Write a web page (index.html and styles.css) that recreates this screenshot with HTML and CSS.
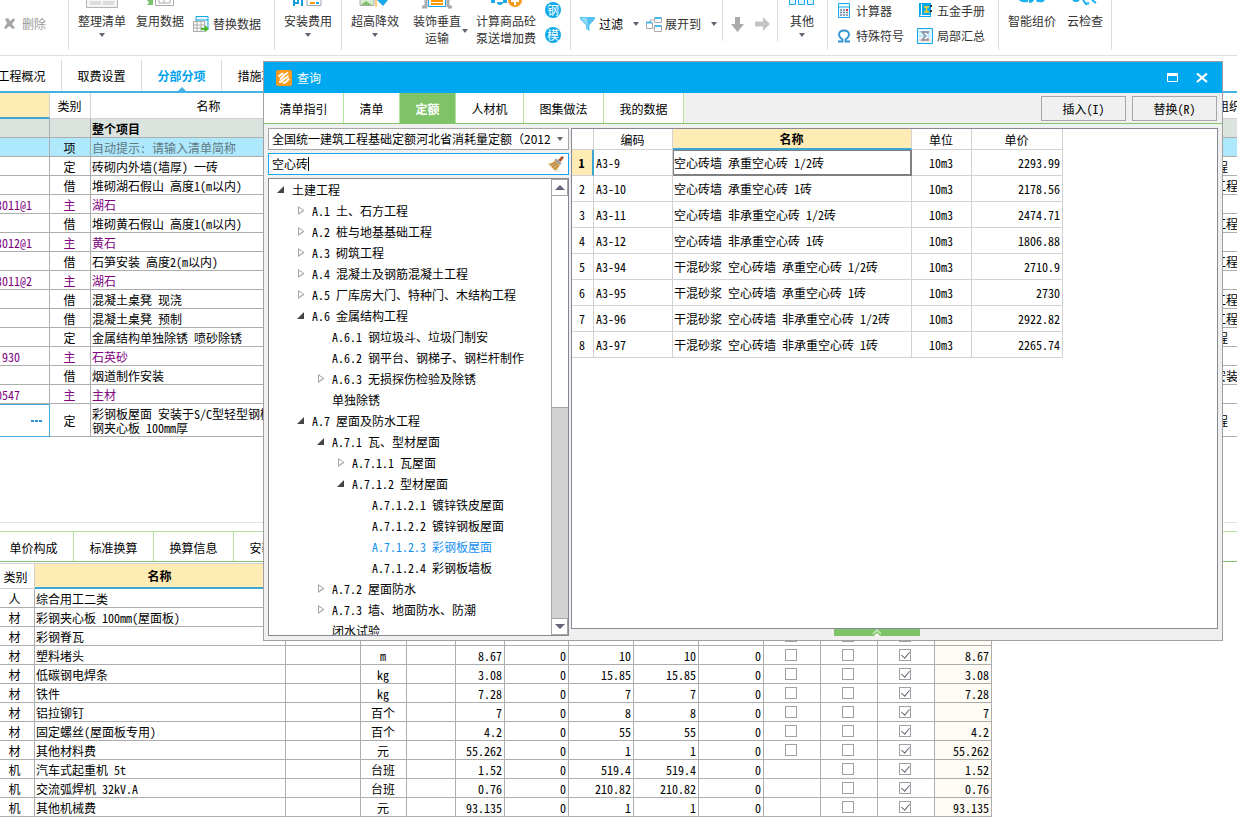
FILE: index.html
```html
<!DOCTYPE html>
<html lang="zh-CN">
<head>
<meta charset="utf-8">
<title>查询</title>
<link rel="stylesheet" href="styles.css">
</head>
<body>
<header class="toolbar">
  <div class="group g-delete">
    <button class="tool muted"><svg width="12" height="12" viewBox="0 0 12 12"><path d="M1 1l3-1 2 3 4-3 1 2-3 4 3 4-2 1-4-3-3 3-2-1 3-5z" fill="#a6a6a6"/></svg>删除</button>
  </div>
  <div class="group g-edit">
    <button class="big"><svg width="32" height="12" viewBox="0 0 32 12"><path d="M.5 0v7.500h31V0" fill="#f4f4f4" stroke="#b5b5b5"/><path d="M4 1h11v4H4zM17 1h11v4H17z" fill="#dcdcdc"/></svg><span>整理清单</span><i class="caret"></i></button>
    <button class="big"><svg width="32" height="12" viewBox="0 0 32 12"><path d="M3 5l2-2-2-3h6v5z" fill="#7dc36b"/><path d="M11.500 0v5.500h18V0M15 0v3h11V0M20 0v3" fill="none" stroke="#aaa"/></svg><span>复用数据</span></button>
    <button class="tool"><svg width="16" height="16" viewBox="0 0 16 16"><path d="M3 .5h12v13H3zM3 4h12" fill="#e9f8fe" stroke="#16a7e0"/><path d="M.5 5.500h11v10H.5zM.5 9h11M.5 12h11M4 5v10M8 5v10" fill="#fff" stroke="#aaa"/><path d="M8 12h4V9l4 4-4 3v-2H8z" fill="#45b82e"/></svg>替换数据</button>
  </div>
  <div class="group g-fee">
    <button class="big"><svg width="32" height="12" viewBox="0 0 32 12"><path d="M2 0v6M6 0v4M10 0v6M1 3h5" fill="none" stroke="#129ee0" stroke-width="2"/><path d="M15 0v5.500h14V0" fill="none" stroke="#9aa5b5"/><path d="M18 3h5" stroke="#f90" stroke-width="2"/><path d="M24 3h3" stroke="#18a9ea" stroke-width="2"/></svg><span>安装费用</span><i class="caret"></i></button>
  </div>
  <div class="group g-high">
    <button class="big"><svg width="32" height="12" viewBox="0 0 32 12"><path d="M1 0v5.500h14V0" fill="#d8eed0" stroke="#aaa"/><path d="M2 5l5-4 6 4z" fill="#7dc36b"/><path d="M17 0v7" stroke="#f90"/><path d="M18 0h11l-5 6z" fill="#18a9ea"/></svg><span>超高降效</span><i class="caret"></i></button>
    <div class="split">
      <button class="big"><svg width="32" height="12" viewBox="0 0 32 12"><path d="M1 7h5M5 7V0M27 7h4M27 7V0" fill="none" stroke="#aaa" stroke-width="3"/><path d="M7.500 0v6.500h17V0" fill="#fff" stroke="#18a9ea"/><path d="M10 1h12M10 4h12" stroke="#f90" stroke-width="2"/></svg><span>装饰垂直<br>运输</span></button>
      <button class="drop" aria-label="更多"><i class="caret"></i></button>
    </div>
    <button class="big"><svg width="32" height="12" viewBox="0 0 32 12"><path d="M1 0h4v3H1zM7 2a3 3 0 1 0 6 0zM13 0h4v3h-4z" fill="#18a9ea"/><circle cx="25" cy="0" r="7" fill="#f79a1c"/><path d="M25 0v5M21 1h8" stroke="#fff" stroke-width="2"/></svg><span>计算商品砼<br>泵送增加费</span></button>
    <div class="stack rounds"><button class="round">钢</button><button class="round">模</button></div>
  </div>
  <div class="group g-filter">
    <button class="tool strong"><svg width="16" height="14" viewBox="0 0 16 14"><path d="M0 0h15v2L9.500 8v6L6 12V8L0 2z" fill="#55c3f1"/><path d="M1 1h6l1 12-1-1V8z" fill="#92dcf8"/></svg>过滤<i class="caret"></i></button>
    <button class="tool"><svg width="16" height="15" viewBox="0 0 16 15"><path d="M.5 5.500h6v6h-6zM8.500.5h7v5h-7zM8.500 8.500h7v6h-7zM4 5V3h4M7 11h2" fill="#fff" stroke="#aaa"/><path d="M0 5.500h6M9 1h6M9 9h6" stroke="#47b9e8" stroke-width="2"/></svg>展开到<i class="caret"></i></button>
  </div>
  <div class="group g-move">
    <button class="tool" aria-label="下移"><svg width="14" height="15" viewBox="0 0 14 15"><path d="M4 0h5v7h4l-6.500 8L0 7h4z" fill="#ababab"/></svg></button>
    <button class="tool" aria-label="右移"><svg width="15" height="14" viewBox="0 0 15 14"><path d="M0 4.500h8V0l7 7-7 7V9.500H0z" fill="#c4c4c4"/></svg></button>
  </div>
  <div class="group g-other">
    <button class="big"><svg width="26" height="12" viewBox="0 0 26 12"><path d="M.5 0v4.500h6V0M9.500 0v4.500h6V0M18.500 0v4.500h6V0" fill="#dff4fd" stroke="#18a9ea"/></svg><span>其他</span><i class="caret"></i></button>
  </div>
  <div class="group g-utils">
    <div class="stack">
      <button class="tool"><svg width="16" height="16" viewBox="0 0 16 16"><path d="M2.500 .5h11v14h-11zM2 4h12" fill="#eefaff" stroke="#18a9ea"/><path d="M4 7h2M7 7h2M4 9.500h2M7 9.500h2M10 9.500h2M4 12h2M7 12h2M10 12h2" stroke="#789" stroke-width="1.500"/><path d="M10 7h2" stroke="#e33" stroke-width="2"/></svg>计算器</button>
      <button class="tool"><svg width="16" height="16" viewBox="0 0 16 16"><path d="M2 13.500h4.500v-2C1 8 2.500 2.500 8 2.500S15 8 9.500 11.500v2H14" fill="none" stroke="#2f94d0" stroke-width="1.800"/></svg>特殊符号</button>
    </div>
    <div class="stack">
      <button class="tool"><svg width="16" height="16" viewBox="0 0 16 16"><path d="M2 0h12v14H2z" fill="#08a8ea"/><path d="M4.500 1v11M3 12.500h10" stroke="#fff"/><path d="M7 4h5M9.500 4v5M7 9h5" stroke="#ffd21f" stroke-width="1.500"/><path d="M14 2v2M14 7v2" stroke="#333" stroke-width="2"/></svg>五金手册</button>
      <button class="tool"><svg width="16" height="16" viewBox="0 0 16 16"><path d="M.5.5h15v15H.5z" fill="#e4f6fd" stroke="#11a7e7"/><path d="M2 4h12M2 8h12" stroke="#7ad0f0" stroke-dasharray="2 1"/><path d="M2 12h12" stroke="#fdc" stroke-width="3"/><path d="M11 6V4H5l3.500 4L5 12h6v-2" fill="none" stroke="#889" stroke-width="1.300"/></svg>局部汇总</button>
    </div>
  </div>
  <div class="group g-smart">
    <button class="big"><svg width="32" height="12" viewBox="0 0 32 12"><path d="M3 0q2 3 9 2V0zM13 0v3q4 0 5-3zM20 0q0 3 7 2l2-2z" fill="#18b1ed"/></svg><span>智能组价</span></button>
    <button class="big"><svg width="32" height="12" viewBox="0 0 32 12"><path d="M4 0q3 2 6 0M14 0l3 4 3-1M23 0l4 3" fill="none" stroke="#18b1ed" stroke-width="2"/></svg><span>云检查</span></button>
  </div>
</header>

<nav class="page-tabs">
  <button>工程概况</button><button>取费设置</button><button class="active">分部分项</button><button>措施项目</button><button>其他项目</button>
</nav>

<main class="upper">
  <table class="grid items">
    <colgroup><col class="c-code"><col class="c-kind"><col class="c-name"><col><col class="c-org"></colgroup>
    <thead><tr><th class="current"></th><th>类别</th><th>名称</th><th></th><th class="org">组织</th></tr></thead>
    <tbody>
      <tr class="total"><td></td><td></td><td>整个项目</td><td></td><td></td></tr>
      <tr class="hint"><td></td><td>项</td><td>自动提示: 请输入清单简称</td><td></td><td></td></tr>
      <tr><td></td><td>定</td><td>砖砌内外墙(墙厚) 一砖</td><td></td><td class="tail">程</td></tr>
      <tr><td></td><td>借</td><td>堆砌湖石假山 高度1(m以内)</td><td></td><td>工程</td></tr>
      <tr class="main"><td>3011@1</td><td>主</td><td>湖石</td><td></td><td></td></tr>
      <tr><td></td><td>借</td><td>堆砌黄石假山 高度1(m以内)</td><td></td><td>工程</td></tr>
      <tr class="main"><td>3012@1</td><td>主</td><td>黄石</td><td></td><td></td></tr>
      <tr><td></td><td>借</td><td>石笋安装 高度2(m以内)</td><td></td><td>工程</td></tr>
      <tr class="main"><td>3011@2</td><td>主</td><td>湖石</td><td></td><td></td></tr>
      <tr><td></td><td>借</td><td>混凝土桌凳 现浇</td><td></td><td>工程</td></tr>
      <tr><td></td><td>借</td><td>混凝土桌凳 预制</td><td></td><td>工程</td></tr>
      <tr><td></td><td>定</td><td>金属结构单独除锈 喷砂除锈</td><td></td><td class="tail">程</td></tr>
      <tr class="main"><td>.930</td><td>主</td><td>石英砂</td><td></td><td></td></tr>
      <tr><td></td><td>借</td><td>烟道制作安装</td><td></td><td>安装</td></tr>
      <tr class="main"><td>0547</td><td>主</td><td>主材</td><td></td><td></td></tr>
      <tr class="tall"><td class="editing"><button class="more" aria-label="选择"><i></i><i></i><i></i></button></td><td>定</td><td>彩钢板屋面 安装于S/C型轻型钢檩条<br>钢夹心板 100mm厚</td><td></td><td class="tail">程</td></tr>
    </tbody>
  </table>
</main>

<section class="lower">
  <nav class="detail-tabs"><button>单价构成</button><button>标准换算</button><button>换算信息</button><button>安装费用</button></nav>
  <table class="grid parts">
    <colgroup><col class="p1"><col class="p2"><col class="p3"><col class="p4"><col class="p5"><col class="p5"><col class="p7"><col class="p8"><col class="p8"><col class="p8"><col class="p11"><col class="p11"><col class="p11"><col class="p11"></colgroup>
    <thead><tr><th>类别</th><th class="current">名称</th><th></th><th></th><th></th><th></th><th></th><th></th><th></th><th></th><th></th><th></th><th></th><th></th></tr></thead>
    <tbody>
      <tr><td>人</td><td>综合用工二类</td><td></td><td></td><td></td><td></td><td></td><td></td><td></td><td></td><td></td><td></td><td></td><td></td></tr>
      <tr><td>材</td><td>彩钢夹心板 100mm(屋面板)</td><td></td><td></td><td></td><td></td><td></td><td></td><td></td><td></td><td></td><td></td><td></td><td></td></tr>
      <tr><td>材</td><td>彩钢脊瓦</td><td></td><td></td><td></td><td></td><td></td><td></td><td></td><td></td><td><input type="checkbox" aria-label="选项一"></td><td><input type="checkbox" aria-label="选项二"></td><td><input type="checkbox" aria-label="选项三" checked></td><td></td></tr>
      <tr><td>材</td><td>塑料堵头</td><td></td><td>m</td><td></td><td>8.67</td><td>0</td><td>10</td><td>10</td><td>0</td><td><input type="checkbox" aria-label="选项一"></td><td><input type="checkbox" aria-label="选项二"></td><td><input type="checkbox" aria-label="选项三" checked></td><td>8.67</td></tr>
      <tr><td>材</td><td>低碳钢电焊条</td><td></td><td>kg</td><td></td><td>3.08</td><td>0</td><td>15.85</td><td>15.85</td><td>0</td><td><input type="checkbox" aria-label="选项一"></td><td><input type="checkbox" aria-label="选项二"></td><td><input type="checkbox" aria-label="选项三" checked></td><td>3.08</td></tr>
      <tr><td>材</td><td>铁件</td><td></td><td>kg</td><td></td><td>7.28</td><td>0</td><td>7</td><td>7</td><td>0</td><td><input type="checkbox" aria-label="选项一"></td><td><input type="checkbox" aria-label="选项二"></td><td><input type="checkbox" aria-label="选项三" checked></td><td>7.28</td></tr>
      <tr><td>材</td><td>铝拉铆钉</td><td></td><td>百个</td><td></td><td>7</td><td>0</td><td>8</td><td>8</td><td>0</td><td><input type="checkbox" aria-label="选项一"></td><td><input type="checkbox" aria-label="选项二"></td><td><input type="checkbox" aria-label="选项三" checked></td><td>7</td></tr>
      <tr><td>材</td><td>固定螺丝(屋面板专用)</td><td></td><td>百个</td><td></td><td>4.2</td><td>0</td><td>55</td><td>55</td><td>0</td><td><input type="checkbox" aria-label="选项一"></td><td><input type="checkbox" aria-label="选项二"></td><td><input type="checkbox" aria-label="选项三" checked></td><td>4.2</td></tr>
      <tr><td>材</td><td>其他材料费</td><td></td><td>元</td><td></td><td>55.262</td><td>0</td><td>1</td><td>1</td><td>0</td><td><input type="checkbox" aria-label="选项一"></td><td><input type="checkbox" aria-label="选项二"></td><td><input type="checkbox" aria-label="选项三" checked></td><td>55.262</td></tr>
      <tr><td>机</td><td>汽车式起重机 5t</td><td></td><td>台班</td><td></td><td>1.52</td><td>0</td><td>519.4</td><td>519.4</td><td>0</td><td></td><td><input type="checkbox" aria-label="选项二"></td><td><input type="checkbox" aria-label="选项三" checked></td><td>1.52</td></tr>
      <tr><td>机</td><td>交流弧焊机 32kV.A</td><td></td><td>台班</td><td></td><td>0.76</td><td>0</td><td>210.82</td><td>210.82</td><td>0</td><td></td><td><input type="checkbox" aria-label="选项二"></td><td><input type="checkbox" aria-label="选项三" checked></td><td>0.76</td></tr>
      <tr><td>机</td><td>其他机械费</td><td></td><td>元</td><td></td><td>93.135</td><td>0</td><td>1</td><td>1</td><td>0</td><td></td><td><input type="checkbox" aria-label="选项二"></td><td><input type="checkbox" aria-label="选项三" checked></td><td>93.135</td></tr>
    </tbody>
  </table>
</section>

<section class="dialog" role="dialog" aria-labelledby="dialog-title">
  <header class="titlebar">
    <svg width="16" height="16" viewBox="0 0 16 16"><rect width="16" height="16" rx="2" fill="#f79a1c"/><path d="M2.500 6.500L7 3M4 9.500L9 4.500M8 5L12 2.500M3 12Q6 12 7 10L12.500 6M7 13Q10 13 13 8.500" fill="none" stroke="#fff" stroke-width="2"/></svg>
    <h1 id="dialog-title">查询</h1>
    <button aria-label="最大化"><svg width="12" height="9" viewBox="0 0 12 9"><path d="M.5 1h10v7.500H.5z" fill="none" stroke="#fff"/><path d="M0 0h11v3H0z" fill="#fff"/></svg></button>
    <button aria-label="关闭"><svg width="12" height="10" viewBox="0 0 12 10"><path d="M1 .5l10 8.500M11 .5L1 9" stroke="#fff" stroke-width="2.200"/></svg></button>
  </header>
  <div class="dialog-bar">
    <nav class="dialog-tabs"><button>清单指引</button><button class="narrow">清单</button><button class="narrow active">定额</button><button class="medium">人材机</button><button>图集做法</button><button>我的数据</button></nav>
    <div class="actions"><button>插入(I)</button><button>替换(R)</button></div>
  </div>
  <div class="dialog-body">
    <aside class="side">
      <div class="field"><select aria-label="定额库"><option>全国统一建筑工程基础定额河北省消耗量定额（2012</option></select><i class="caret"></i></div>
      <div class="field search"><input type="text" value="空心砖" aria-label="查询内容"><i class="cursor"></i><button aria-label="清除"><svg width="16" height="16" viewBox="0 0 16 16"><path d="M14 0l2 1.500L12.500 6 10 4z" fill="#b5542b"/><path d="M8 2.500l5.500 5L12 9 6.500 4z" fill="#8a9aa5"/><path d="M7 4l5 4.500Q10 14 7 15L0 7.500Q5 7.500 7 4z" fill="#d9ac62"/><path d="M8 6L3 8.500M9.500 7.500L4 11M10.500 9L6 13.500" stroke="#9c7132" stroke-width=".8"/><path d="M7 15h6" stroke="#ddd"/></svg></button></div>
      <div class="tree-box">
        <ul class="tree" role="tree">
          <li class="open"><span>土建工程</span>
            <ul>
              <li class="shut"><span>A.1 土、石方工程</span></li>
              <li class="shut"><span>A.2 桩与地基基础工程</span></li>
              <li class="shut"><span>A.3 砌筑工程</span></li>
              <li class="shut"><span>A.4 混凝土及钢筋混凝土工程</span></li>
              <li class="shut"><span>A.5 厂库房大门、特种门、木结构工程</span></li>
              <li class="open"><span>A.6 金属结构工程</span>
                <ul>
                  <li><span>A.6.1 钢垃圾斗、垃圾门制安</span></li>
                  <li><span>A.6.2 钢平台、钢梯子、钢栏杆制作</span></li>
                  <li class="shut"><span>A.6.3 无损探伤检验及除锈</span></li>
                  <li><span>单独除锈</span></li>
                </ul>
              </li>
              <li class="open"><span>A.7 屋面及防水工程</span>
                <ul>
                  <li class="open"><span>A.7.1 瓦、型材屋面</span>
                    <ul>
                      <li class="shut"><span>A.7.1.1 瓦屋面</span></li>
                      <li class="open"><span>A.7.1.2 型材屋面</span>
                        <ul>
                          <li><span>A.7.1.2.1 镀锌铁皮屋面</span></li>
                          <li><span>A.7.1.2.2 镀锌钢板屋面</span></li>
                          <li class="selected"><span>A.7.1.2.3 彩钢板屋面</span></li>
                          <li><span>A.7.1.2.4 彩钢板墙板</span></li>
                        </ul>
                      </li>
                    </ul>
                  </li>
                  <li class="shut"><span>A.7.2 屋面防水</span></li>
                  <li class="shut"><span>A.7.3 墙、地面防水、防潮</span></li>
                  <li><span>闭水试验</span></li>
                </ul>
              </li>
            </ul>
          </li>
        </ul>
        <div class="scrollbar"><button class="up" aria-label="向上"></button><div class="thumb"></div><div class="track"></div><button class="down" aria-label="向下"></button></div>
      </div>
    </aside>
    <div class="results-wrap">
      <div class="results">
        <table class="grid quota">
          <colgroup><col class="q1"><col class="q2"><col class="q3"><col class="q4"><col class="q5"></colgroup>
          <thead><tr><th></th><th>编码</th><th class="current">名称</th><th>单位</th><th>单价</th></tr></thead>
          <tbody>
            <tr class="picked"><th>1</th><td>A3-9</td><td>空心砖墙 承重空心砖 1/2砖</td><td>10m3</td><td>2293.99</td></tr>
            <tr><th>2</th><td>A3-10</td><td>空心砖墙 承重空心砖 1砖</td><td>10m3</td><td>2178.56</td></tr>
            <tr><th>3</th><td>A3-11</td><td>空心砖墙 非承重空心砖 1/2砖</td><td>10m3</td><td>2474.71</td></tr>
            <tr><th>4</th><td>A3-12</td><td>空心砖墙 非承重空心砖 1砖</td><td>10m3</td><td>1806.88</td></tr>
            <tr><th>5</th><td>A3-94</td><td>干混砂浆 空心砖墙 承重空心砖 1/2砖</td><td>10m3</td><td>2710.9</td></tr>
            <tr><th>6</th><td>A3-95</td><td>干混砂浆 空心砖墙 承重空心砖 1砖</td><td>10m3</td><td>2730</td></tr>
            <tr><th>7</th><td>A3-96</td><td>干混砂浆 空心砖墙 非承重空心砖 1/2砖</td><td>10m3</td><td>2922.82</td></tr>
            <tr><th>8</th><td>A3-97</td><td>干混砂浆 空心砖墙 非承重空心砖 1砖</td><td>10m3</td><td>2265.74</td></tr>
          </tbody>
        </table>
      </div>
      <button class="handle" aria-label="展开"><svg width="10" height="7" viewBox="0 0 10 7"><path d="M1 5l4-4 4 4" fill="none" stroke="#c9e8bf" stroke-width="1.500"/><path d="M5 4l3 3H2z" fill="#fff"/></svg></button>
    </div>
  </div>
</section>
</body>
</html>
```
FILE: styles.css
```css
* { box-sizing: border-box; }
html, body { height: 100%; }
body {
  margin: 0;
  display: flex;
  flex-direction: column;
  overflow: hidden;
  position: relative;
  background: #fff;
  color: #000;
  font: 12px/18px "Noto Sans CJK SC", "Noto Sans", sans-serif;
  font-feature-settings: "hwid";
}
button, input, select {
  margin: 0;
  padding: 0;
  border: 0;
  background: none;
  color: inherit;
  font: inherit;
  font-feature-settings: inherit;
}
svg { display: block; flex: none; }
.caret {
  flex: none;
  width: 0;
  height: 0;
  border: 3px solid transparent;
  border-top: 4px solid #5f6470;
  border-bottom: 0;
}

/* Toolbar */
.toolbar {
  flex: none;
  display: flex;
  height: 56px;
  padding-bottom: 5px;
  border-bottom: 1px solid #dcdcdc;
  color: #333;
  overflow: hidden;
}
.group { flex: none; display: flex; align-items: flex-start; border-right: 1px solid #dcdcdc; }
.tool { display: flex; align-items: center; gap: 4px; height: 16px; margin-top: 16px; white-space: nowrap; }
.tool .caret { margin-left: 5px; }
.muted { color: #999; gap: 6px; }
.strong { color: #000; }
.big { display: flex; flex-direction: column; align-items: center; line-height: 17px; white-space: nowrap; }
.big .caret { margin-top: 4px; }
.split { display: flex; gap: 1px; }
.drop { padding-top: 33px; }
.stack { display: flex; flex-direction: column; gap: 9px; padding-top: 3px; }
.stack .tool { margin-top: 0; }
.g-delete { width: 69px; padding-left: 4px; }
.g-edit { width: 206px; padding-left: 9px; gap: 10px; }
.g-edit .tool { margin-left: -1px; }
.g-fee { width: 67px; padding-left: 9px; }
.g-high { width: 229px; padding-left: 9px; gap: 8px; }
.g-high .split { margin-left: 6px; }
.g-high .rounds { margin-left: 1px; padding-top: 2px; }
.g-filter { width: 151px; padding-left: 9px; gap: 7px; border-right: 0; }
.g-filter .tool { gap: 3px; }
.g-filter .tool .caret { margin-left: 7px; }
.g-move { width: 56px; padding-left: 8px; gap: 10px; height: 41px; border-left: 1px solid #dcdcdc; }
.g-other { width: 50px; padding-left: 11px; }
.g-utils { width: 171px; padding-left: 8px; gap: 13px; }
.g-smart { width: 113px; padding-left: 9px; gap: 11px; }
.round {
  width: 16px;
  height: 16px;
  border-radius: 50%;
  background: #0ea9e8;
  color: #fff;
  line-height: 16px;
  text-align: center;
}

/* Page tabs */
.page-tabs {
  flex: none;
  display: flex;
  height: 37px;
  padding-top: 4px;
  margin-left: -18px;
  border-bottom: 2px solid #41b2e3;
}
.page-tabs button { flex: none; width: 80px; border-right: 1px solid #d9d9d9; }
.page-tabs .active { position: relative; color: #00a2ee; font-weight: bold; }
.page-tabs .active::after {
  content: "";
  position: absolute;
  left: 50%;
  bottom: 0;
  margin-left: -4px;
  border: 4px solid transparent;
  border-top: 0;
  border-bottom-color: #41b2e3;
}

/* Grids */
.grid { table-layout: fixed; border-collapse: separate; border-spacing: 0; }
.grid th, .grid td {
  height: 19px;
  padding: 1px 2px 0 1px;
  border: solid #adadad;
  border-width: 0 1px 1px 0;
  line-height: 14px;
  white-space: nowrap;
  overflow: hidden;
}
.grid th { font-weight: normal; border-color: #d2d2d2; }
.grid .current { background: #ffebb3; border-bottom: 2px solid #3ba6d3; font-weight: bold; }

.upper { flex: 1 1 auto; min-height: 0; border-bottom: 1px solid #e2e2e2; }
.items { width: 100%; }
.items .c-code { width: 50px; }
.items .c-kind { width: 41px; }
.items .c-name { width: 237px; }
.items .c-org { width: 24px; }
.items thead th { height: 26px; padding-top: 0; }
.items td:nth-child(2) { text-align: center; }
.items td:first-child { padding-left: 0; text-indent: -4px; }
.items .org, .items td:last-child { padding-right: 0; text-align: left; border-right: 0; }
.items .org { padding-left: 4px; }
.items td.tail { padding-left: 3px; }
.items .total td { background: #dae3de; font-weight: bold; }
.items .hint td { background: #aee8fc; }
.items .hint td:nth-child(3) { color: #607883; }
.items .main { color: #800080; }
.items .tall td { height: 33px; }
.items td.editing { border: 1px solid #41a9d9; border-left: 0; }
.more { display: flex; gap: 1px; margin-left: auto; margin-right: 5px; }
.more i { width: 3px; height: 2px; background: #2f94d8; }

/* Detail panel */
.lower { flex: none; padding: 8px 0 1px; }
.detail-tabs { display: flex; height: 31px; border-top: 1px solid #b2e2a0; border-bottom: 1px solid #82c46c; }
.detail-tabs button { flex: none; width: 80px; padding-top: 2px; border-right: 1px solid #b2e2a0; }
.detail-tabs button:first-child { width: 74px; padding-right: 6px; }
.parts { width: 992px; margin-top: 1px; border-top: 1px solid #d2d2d2; }
.parts .p1 { width: 35px; }
.parts .p2 { width: 251px; }
.parts .p3 { width: 75px; }
.parts .p4 { width: 46px; }
.parts .p5 { width: 49px; }
.parts .p7 { width: 64px; }
.parts .p8 { width: 65px; }
.parts .p11 { width: 57px; }
.parts thead th { height: 25px; }
.parts td { text-align: right; }
.parts td:nth-child(2) { text-align: left; }
.parts td:first-child, .parts td:nth-child(4) { text-align: center; }
.parts td:first-child { padding-right: 6px; }
.parts th:first-child { padding-right: 4px; }
.parts td:nth-child(n+11) { text-align: center; }
.parts td:last-child { text-align: right; background: #fffbf5; }
.parts input {
  appearance: none;
  display: block;
  width: 12px;
  height: 12px;
  margin: 0 auto;
  border: 1px solid #a0a0a0;
  background: #fff;
}
.parts td:nth-child(n+11):nth-child(-n+13) { padding: 0 2px 0 0; }
.parts input:checked::before {
  content: "";
  display: block;
  width: 4px;
  height: 7px;
  margin: 0 0 0 3px;
  border: solid #63687a;
  border-width: 0 1px 1px 0;
  transform: rotate(40deg);
}

/* Query dialog */
.dialog {
  position: absolute;
  top: 61px;
  right: 14px;
  bottom: 177px;
  left: 263px;
  display: flex;
  flex-direction: column;
  border: 1px solid #a0a0a0;
  background: #f0f0f0;
}
.titlebar { flex: none; display: flex; align-items: center; height: 31px; padding: 0 14px 0 12px; background: #00a8f0; color: #fff; }
.titlebar h1 { flex: 1; margin: 0 0 0 5px; font-size: 12px; font-weight: normal; line-height: 18px; }
.titlebar button + button { margin-left: 17px; }
.dialog-bar { flex: none; display: flex; justify-content: space-between; height: 31px; border-bottom: 1px solid #82c46c; }
.dialog-tabs { display: flex; }
.dialog-tabs button { width: 80px; padding-top: 2px; border-right: 1px solid #b2e2a0; background: #fff; }
.dialog-tabs .narrow { width: 56px; }
.dialog-tabs .medium { width: 68px; }
.dialog-tabs .active { background: #7fc369; color: #fff; font-weight: bold; }
.actions { display: flex; gap: 6px; padding: 3px 5px 2px 0; }
.actions button { width: 85px; border: 1px solid #a6a6a6; background: #f0f0f0; }
.dialog-body { flex: 1; min-height: 0; display: flex; gap: 2px; padding: 4px; }
.side { flex: none; width: 301px; display: flex; flex-direction: column; gap: 3px; }
.field { flex: none; display: flex; align-items: center; height: 22px; padding: 0 5px 0 3px; border: 1px solid #a6a6a6; background: #fff; }
.field select { flex: 1; min-width: 0; height: 20px; appearance: none; outline: 0; font-feature-settings: normal; }
.search { border: 1px solid #16a7ea; padding-right: 4px; }
.search input { flex: 0 1 auto; min-width: 0; field-sizing: content; outline: 0; }
.search button { margin-left: auto; }
.cursor { width: 1px; height: 14px; background: #000; }
.tree-box { flex: 1; min-height: 0; display: flex; border: 1px solid #858994; background: #fff; overflow: hidden; }
.tree { flex: 1; min-width: 0; margin: 0; padding: 0 0 0 3px; list-style: none; white-space: nowrap; line-height: 21px; }
.tree ul { margin: 0; padding: 0; list-style: none; }
.tree li { position: relative; padding-left: 20px; }
.tree span { display: block; }
.tree li::before { position: absolute; left: 5px; top: 7px; content: ""; }
.tree .open::before { width: 7px; height: 7px; background: #444; clip-path: polygon(100% 0, 100% 100%, 0 100%); }
.tree .shut::before { left: 6px; top: 6px; width: 6px; height: 9px; background: #a6a6a6; clip-path: polygon(evenodd, 0 0, 6px 4px, 6px 5px, 0 9px, 0 0, 1px 2px, 1px 7px, 5px 4px, 1px 2px); }
.tree .selected { color: #1590f0; }
.scrollbar { flex: none; width: 17px; display: flex; flex-direction: column; border-left: 1px solid #a6a6a6; }
.scrollbar button { flex: none; height: 17px; border: 1px solid #a6a6a6; border-left: 0; display: grid; place-items: center; }
.scrollbar button::before { content: ""; border: 5px solid transparent; }
.scrollbar .up::before { border-top: 0; border-bottom: 5px solid #606575; }
.scrollbar .down::before { border-bottom: 0; border-top: 5px solid #606575; }
.thumb { flex: 1; border-bottom: 1px solid #a6a6a6; background: #fff; }
.track { flex: 1; background: #d2d2d2; }
.results-wrap { flex: 1; min-width: 0; display: flex; flex-direction: column; }
.results { flex: 1; min-height: 0; border: 1px solid #858994; background: #fff; overflow: hidden; }
.quota { width: 491px; }
.quota .q1 { width: 22px; }
.quota .q2 { width: 79px; }
.quota .q3 { width: 239px; }
.quota .q4 { width: 60px; }
.quota .q5 { width: 91px; }
.quota th, .quota td { border-color: #d2d2d2; }
.quota thead th { height: 21px; }
.quota tbody th, .quota tbody td { height: 26px; padding-top: 0; }
.quota td:nth-child(2) { padding-left: 2px; }
.quota td:nth-child(4) { text-align: center; }
.quota td:nth-child(5) { text-align: right; }
.quota .picked th { background: #ffebb3; border-right: 2px solid #3ba6d3; font-weight: bold; }
.quota .picked td:nth-child(3) { padding-left: 0; border: 2px solid #808080; border-width: 1px 2px 2px 1px; }
.handle { flex: none; display: grid; place-items: center; width: 86px; height: 7px; margin-left: 263px; background: #7fc369; }
```
